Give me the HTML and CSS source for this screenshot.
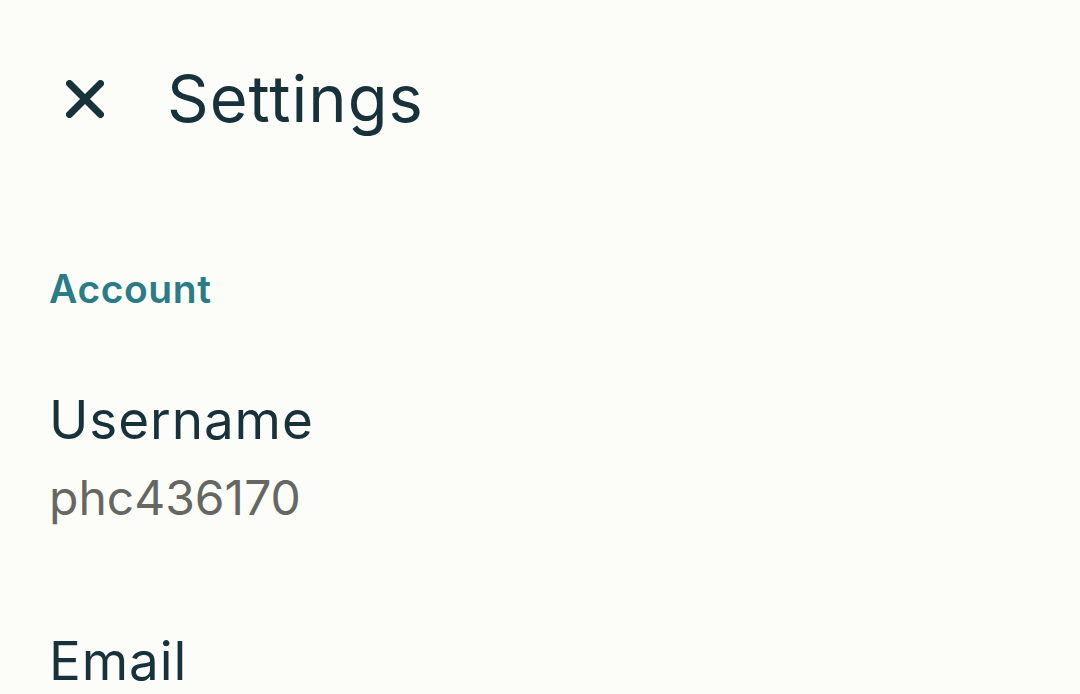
FILE: index.html
```html
<!DOCTYPE html>
<html lang="en">
<head>
    <meta charset="UTF-8">
    <meta name="viewport" content="width=device-width, initial-scale=1.0">
    <title>Settings</title>
    <link rel="stylesheet" href="styles.css">
</head>
<body>
    <div class="screen">
        <div class="topbar">
            <button class="close-btn" aria-label="Close">
                <svg viewBox="0 0 38 38" width="38" height="38">
                    <path d="M3.5 3.5 L34.5 34.5 M34.5 3.5 L3.5 34.5" stroke="currentColor" stroke-width="7" stroke-linecap="round"/>
                </svg>
            </button>
            <h1>Settings</h1>
        </div>

        <div class="section">
            <h2 class="section-title">Account</h2>

            <div class="setting">
                <div class="setting-label">Username</div>
                <div class="setting-value">phc436170</div>
            </div>

            <div class="setting">
                <div class="setting-label">Email</div>
            </div>
        </div>
    </div>
</body>
</html>
```

FILE: styles.css
```css
/* Base */
body {
    margin: 0;
    background: #fcfdf9;
    font-family: Inter, 'Liberation Sans', sans-serif;
    color: #17323a;
    overflow: hidden;
}

.screen {
    padding: 0 49px;
    height: 694px;
    box-sizing: border-box;
    overflow: hidden;
}

/* Top bar */
.topbar {
    display: flex;
    align-items: center;
    padding-top: 66px;
    margin-bottom: 138px;
}

.close-btn {
    background: none;
    border: none;
    padding: 0;
    margin-left: 17px;
    width: 38px;
    height: 38px;
    color: #17323a;
    display: flex;
}

.close-btn svg {
    width: 38px;
    height: 38px;
}

.topbar h1 {
    margin: 0 0 0 63px;
    font-size: 65px;
    font-weight: 400;
    line-height: 1;
    letter-spacing: 1px;
}

/* Sections */
.section-title {
    margin: 0 0 29px;
    font-size: 39px;
    font-weight: 600;
    color: #2a7c86;
    line-height: 1;
    letter-spacing: 0.6px;
}

.setting {
    padding: 52px 0;
}

.setting:last-child {
    padding-bottom: 0;
}

.setting-label {
    font-size: 53px;
    line-height: 1.2;
    letter-spacing: 0.9px;
}

.setting-value {
    margin-top: 16px;
    font-size: 48px;
    color: #666762;
    line-height: 1.2;
}
```
